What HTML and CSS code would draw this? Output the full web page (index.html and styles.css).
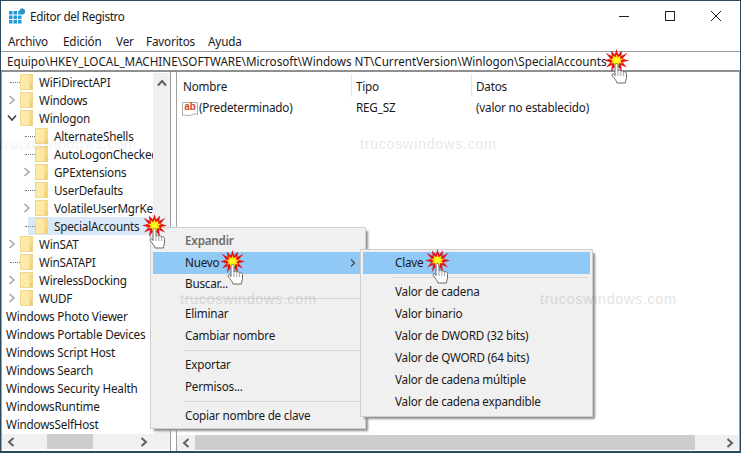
FILE: index.html
```html
<!DOCTYPE html>
<html lang="es">
<head>
<meta charset="utf-8">
<title>Editor del Registro</title>
<link rel="stylesheet" href="styles.css">
</head>
<body>
<svg class="defs" width="0" height="0" aria-hidden="true">
  <defs>
    <radialGradient id="glow"><stop offset="0.25" stop-color="#fffb1e"/><stop offset="0.7" stop-color="#ffe000"/><stop offset="1" stop-color="#ff9c00"/></radialGradient>
    <symbol id="folder" viewBox="0 0 14 16">
      <rect x="0.5" y="0.5" width="12" height="15" fill="#fde9a8"/>
      <rect x="9" y="1" width="3.5" height="14.5" fill="#f9dc8a"/>
      <path d="M0.5 15.5H13V10L10 10.5V15.5" fill="#f2cf6e"/>
      <rect x="0.5" y="0.5" width="12" height="15" fill="none" stroke="#f0d78e" stroke-width="1"/>
    </symbol>
    <symbol id="clicker" viewBox="0 0 26 36">
      <polygon points="12.5,0 14.2,5.5 18,1.5 17.4,7 23.5,3.8 18.6,9.8 25,11.5 18.6,13.2 23,18.5 17,16 18,23 14.2,17.5 12.5,24.5 10.8,17.5 7,23 8,16 2,18.5 6.4,13.2 0,11.5 6.4,9.8 1.5,3.8 7.6,7 7,1.5 10.8,5.5" fill="#e5141b"/>
      <polygon points="12.5,5 13.7,8.2 16.6,6.3 15.9,9.6 19.4,10 16.3,11.9 18.6,14.8 15.2,14.1 14.9,17.6 12.5,15.2 10.1,17.6 9.8,14.1 6.4,14.8 8.7,11.9 5.6,10 9.1,9.6 8.4,6.3 11.3,8.2" fill="url(#glow)"/>
      <path d="M11 16C11 14 14 14 14 16V22C14.6 21 16.4 21 16.8 22.3C17.4 21.4 19.2 21.6 19.6 23C20.4 22.4 22.5 22.8 22.5 24.5V28C22.5 30.5 21.5 31.5 21.5 34H13C12.5 31.5 10 29 8.5 27C7.5 25 9 24 10 25L11 26.5Z" fill="#fff" stroke="#6b6b6b" stroke-width="1"/>
      <path d="M14 22V27M16.8 22.3V27M19.6 23V27" fill="none" stroke="#8a8a8a" stroke-width="0.8"/>
    </symbol>
    <symbol id="chev-r" viewBox="0 0 8 10"><path d="M1.5 1L6 5L1.5 9" fill="none" stroke="#a6a6a6" stroke-width="1.6"/></symbol>
    <symbol id="chev-d" viewBox="0 0 10 8"><path d="M1 1.5L5 6L9 1.5" fill="none" stroke="#404040" stroke-width="1.6"/></symbol>
    <symbol id="chev-m" viewBox="0 0 8 10"><path d="M2 1.5L5.5 5L2 8.5" fill="none" stroke="#404040" stroke-width="1.1"/></symbol>
    <symbol id="arrow-l" viewBox="0 0 8 10"><path d="M6.5 1L2 5L6.5 9" fill="none" stroke="#606060" stroke-width="2"/></symbol>
    <symbol id="arrow-r" viewBox="0 0 8 10"><path d="M1.5 1L6 5L1.5 9" fill="none" stroke="#606060" stroke-width="2"/></symbol>
    <symbol id="arrow-u" viewBox="0 0 10 8"><path d="M1 6.5L5 2L9 6.5" fill="none" stroke="#606060" stroke-width="2"/></symbol>
  </defs>
</svg>

<main class="window">
  <header class="titlebar">
    <svg class="app-icon" width="16" height="16" viewBox="0 0 16 16" aria-hidden="true">
      <g fill="#1e9bd8">
        <rect x="0" y="3" width="3.5" height="3.5"/><rect x="4.5" y="3" width="3.5" height="3.5"/><rect x="9" y="3" width="3" height="3.5" fill="#37a9e0"/>
        <rect x="0" y="7.5" width="3.5" height="3.5"/><rect x="4.5" y="7.5" width="3.5" height="3.5"/><rect x="9" y="7.5" width="3.5" height="3.5"/>
        <rect x="0" y="12" width="3.5" height="3.5"/><rect x="4.5" y="12" width="3.5" height="3.5"/><rect x="9" y="12" width="3.5" height="3.5"/>
      </g>
      <path d="M13 0L16 2V5L13 7L10.5 5V2Z" fill="#2f8fc4"/>
    </svg>
    <span class="title">Editor del Registro</span>
    <div class="controls">
      <svg width="46" height="30" viewBox="0 0 46 30" aria-hidden="true"><path d="M18 15.5H28" stroke="#222" stroke-width="1"/></svg>
      <svg width="46" height="30" viewBox="0 0 46 30" aria-hidden="true"><rect x="18.5" y="10.5" width="9" height="9" fill="none" stroke="#222" stroke-width="1"/></svg>
      <svg width="46" height="30" viewBox="0 0 46 30" aria-hidden="true"><path d="M18 10L28 20M28 10L18 20" stroke="#222" stroke-width="1"/></svg>
    </div>
  </header>

  <nav class="menubar">
    <span>Archivo</span><span>Edición</span><span>Ver</span><span>Favoritos</span><span>Ayuda</span>
  </nav>

  <div class="address">Equipo\HKEY_LOCAL_MACHINE\SOFTWARE\Microsoft\Windows NT\CurrentVersion\Winlogon\SpecialAccounts</div>

  <div class="panes">
    <section class="tree-pane">
      <div class="tree-main">
        <ul class="tree">
          <li class="row"><span class="twig"></span><svg class="folder"><use href="#folder"/></svg><span class="label">WiFiDirectAPI</span></li>
          <li class="row"><svg class="chev-r"><use href="#chev-r"/></svg><svg class="folder"><use href="#folder"/></svg><span class="label">Windows</span></li>
          <li class="row"><svg class="chev-d"><use href="#chev-d"/></svg><svg class="folder"><use href="#folder"/></svg><span class="label">Winlogon</span></li>
          <li class="row child"><span class="twig"></span><svg class="folder"><use href="#folder"/></svg><span class="label">AlternateShells</span></li>
          <li class="row child"><span class="twig"></span><svg class="folder"><use href="#folder"/></svg><span class="label">AutoLogonChecked</span></li>
          <li class="row child"><svg class="chev-r"><use href="#chev-r"/></svg><svg class="folder"><use href="#folder"/></svg><span class="label">GPExtensions</span></li>
          <li class="row child"><span class="twig"></span><svg class="folder"><use href="#folder"/></svg><span class="label">UserDefaults</span></li>
          <li class="row child"><svg class="chev-r"><use href="#chev-r"/></svg><svg class="folder"><use href="#folder"/></svg><span class="label">VolatileUserMgrKey</span></li>
          <li class="row child selected"><span class="twig"></span><svg class="folder"><use href="#folder"/></svg><span class="label">SpecialAccounts</span></li>
          <li class="row"><svg class="chev-r"><use href="#chev-r"/></svg><svg class="folder"><use href="#folder"/></svg><span class="label">WinSAT</span></li>
          <li class="row"><span class="twig"></span><svg class="folder"><use href="#folder"/></svg><span class="label">WinSATAPI</span></li>
          <li class="row"><svg class="chev-r"><use href="#chev-r"/></svg><svg class="folder"><use href="#folder"/></svg><span class="label">WirelessDocking</span></li>
          <li class="row"><svg class="chev-r"><use href="#chev-r"/></svg><svg class="folder"><use href="#folder"/></svg><span class="label">WUDF</span></li>
          <li class="row plain">Windows Photo Viewer</li>
          <li class="row plain">Windows Portable Devices</li>
          <li class="row plain">Windows Script Host</li>
          <li class="row plain">Windows Search</li>
          <li class="row plain">Windows Security Health</li>
          <li class="row plain">WindowsRuntime</li>
          <li class="row plain">WindowsSelfHost</li>
        </ul>
        <div class="vscroll"><svg class="arrow-u"><use href="#arrow-u"/></svg></div>
      </div>
      <div class="hscroll hscroll-left">
        <svg class="arrow"><use href="#arrow-l"/></svg>
        <div class="track track-left"><div class="thumb"></div></div>
        <svg class="arrow"><use href="#arrow-r"/></svg>
      </div>
    </section>

    <section class="list-pane">
      <div class="list-main">
        <div class="list-head">
          <span class="col-name">Nombre</span><span class="col-type">Tipo</span><span class="col-data">Datos</span>
        </div>
        <div class="list-row">
          <span class="col-name cell-name">
            <svg class="ab-frame" viewBox="0 0 16 16" aria-hidden="true"><path d="M0.5 1.5H15.5V13.5C12 11.5 9 15.5 6 14.5C4 14 2 14 0.5 14.5Z" fill="#fff" stroke="#ababab"/></svg>
            <span class="ab-icon">ab</span>(Predeterminado)
          </span>
          <span class="col-type">REG_SZ</span>
          <span class="col-data">(valor no establecido)</span>
        </div>
      </div>
      <div class="hscroll hscroll-right">
        <svg class="arrow"><use href="#arrow-l"/></svg>
        <div class="track"><div class="thumb"></div></div>
        <svg class="arrow"><use href="#arrow-r"/></svg>
      </div>
    </section>
  </div>
</main>

<div class="menu menu-main">
  <div class="item strong">Expandir</div>
  <div class="item hot">Nuevo<svg class="submenu-arrow"><use href="#chev-m"/></svg></div>
  <div class="item">Buscar...</div>
  <div class="sep"></div>
  <div class="item">Eliminar</div>
  <div class="item">Cambiar nombre</div>
  <div class="sep sep-tight"></div>
  <div class="item">Exportar</div>
  <div class="item">Permisos...</div>
  <div class="sep sep-tight"></div>
  <div class="item">Copiar nombre de clave</div>
</div>

<div class="menu menu-sub">
  <div class="item hot">Clave</div>
  <div class="sep"></div>
  <div class="item">Valor de cadena</div>
  <div class="item">Valor binario</div>
  <div class="item">Valor de DWORD (32 bits)</div>
  <div class="item">Valor de QWORD (64 bits)</div>
  <div class="item">Valor de cadena múltiple</div>
  <div class="item">Valor de cadena expandible</div>
</div>

<span class="mark mark-a">trucoswindows.com</span>
<span class="mark mark-b">trucoswindows.com</span>
<span class="mark mark-c">trucoswindows.com</span>
<span class="mark mark-d">trucoswindows.com</span>

<svg class="click click-a"><use href="#clicker"/></svg>
<svg class="click click-b"><use href="#clicker"/></svg>
<svg class="click click-c"><use href="#clicker"/></svg>
<svg class="click click-d"><use href="#clicker"/></svg>
</body>
</html>
```

FILE: styles.css
```css
* { box-sizing: border-box; }
html, body { margin: 0; padding: 0; }
body {
  position: relative;
  width: 741px;
  height: 453px;
  overflow: hidden;
  background: #fff;
  font: 11.7px "Noto Sans", "Open Sans", sans-serif;
  color: #1a1a1a;
}
.defs { position: absolute; }

.window {
  display: flex;
  flex-direction: column;
  width: 741px;
  height: 453px;
  border: 1px solid #2b4a5e;
  border-bottom-width: 2px;
  background: #fff;
}

.titlebar { display: flex; align-items: center; height: 30px; flex: none; }
.app-icon { margin: 0 5px 0 8px; flex: none; }
.title { letter-spacing: -0.35px; }
.controls { display: flex; margin-left: auto; margin-right: 1px; }

.menubar { display: flex; height: 20px; flex: none; align-items: center; padding-left: 7px; letter-spacing: -0.15px; }
.menubar span:nth-child(1) { width: 55px; }
.menubar span:nth-child(2) { width: 53px; }
.menubar span:nth-child(3) { width: 30px; }
.menubar span:nth-child(4) { width: 62px; }

.address {
  height: 21px;
  flex: none;
  line-height: 19px;
  padding-left: 6px;
  border-top: 1px solid #9a9a9a;
  border-bottom: 2px solid #8f8f8f;
  white-space: nowrap;
  letter-spacing: -0.02px;
}

.panes { flex: 1; display: flex; min-height: 0; }

.tree-pane {
  width: 170px;
  flex: none;
  display: flex;
  flex-direction: column;
  border-right: 1px solid #a0a0a0;
  border-left: 1px solid #a0a0a0;
}
.tree-main { flex: 1; display: flex; min-height: 0; padding-top: 1px; }
.tree {
  list-style: none;
  margin: 0;
  padding: 0;
  width: 151px;
  flex: none;
  overflow: hidden;
  letter-spacing: -0.2px;
}
.row {
  display: flex;
  align-items: center;
  height: 18px;
  white-space: nowrap;
  padding-left: 4px;
}
.row.child { padding-left: 19px; }
.row.plain { padding-left: 4px; }
.selected { background: linear-gradient(#d9e9f8, #d9e9f8) no-repeat 26px 0 / 100% 100%; }
.twig { width: 10px; height: 1px; margin-left: 4px; border-top: 1px dotted #777; flex: none; }
.chev-r { width: 8px; height: 10px; margin: 0 4px 0 2px; flex: none; }
.chev-d { width: 10px; height: 8px; margin: 0 3px 0 1px; flex: none; }
.folder { width: 14px; height: 16px; flex: none; margin-right: 5px; }
.label { flex: none; }

.vscroll {
  flex: 1;
  background: #f0f0f0;
  display: flex;
  justify-content: center;
  padding-top: 6px;
}
.arrow-u { width: 10px; height: 8px; }

.hscroll {
  height: 15px;
  flex: none;
  margin-bottom: 2px;
  background: #f0f0f0;
  display: flex;
  align-items: center;
}
.arrow { width: 8px; height: 10px; flex: none; margin: 0 5px; }
.track { flex: 1; height: 15px; }
.thumb { height: 100%; background: #cdcdcd; }
.hscroll-left { padding-right: 17px; }
.track-left { padding-left: 27px; padding-right: 42px; }

.list-pane {
  flex: 1;
  display: flex;
  flex-direction: column;
  margin-left: 5px;
  border-left: 1px solid #a0a0a0;
  border-right: 1px solid #a0a0a0;
  letter-spacing: -0.2px;
}
.list-main { flex: 1; min-height: 0; }
.list-head, .list-row { display: flex; align-items: center; }
.list-head { height: 25px; padding-top: 2px; }
.list-head span { height: 100%; display: flex; align-items: center; }
.list-head .col-type, .list-head .col-data { border-left: 1px solid #e5e5e5; }
.list-row { height: 20px; }
.col-name { width: 174px; padding-left: 6px; flex: none; }
.col-type { width: 120px; padding-left: 4px; flex: none; }
.col-data { padding-left: 4px; }
.list-row .col-type { padding-left: 5px; }
.list-row .col-data { padding-left: 5px; }
.cell-name { display: flex; align-items: center; padding-left: 5px; position: relative; }
.ab-frame { position: absolute; left: 5px; top: 2px; width: 16px; height: 16px; }
.ab-icon {
  width: 16px;
  margin-right: 1px;
  font: bold 10px/13px "Liberation Sans", sans-serif;
  letter-spacing: 0;
  text-align: center;
  color: #d5432a;
  flex: none;
  position: relative;
  top: -1px;
}
.hscroll-right { margin-bottom: 1px; }
.hscroll-right .track { padding: 0 26px 0 0; }

.menu {
  position: absolute;
  background: #f0f0f0;
  border: 1px solid #cfcfcf;
  padding: 2px;
  box-shadow: 3px 3px 2px -1px #8f8f8f;
  letter-spacing: -0.22px;
}
.menu-main { left: 150px; top: 227px; width: 216px; height: 202px; }
.menu-sub { left: 360px; top: 249px; width: 233px; height: 168px; }
.item { height: 22px; line-height: 21px; padding-left: 32px; position: relative; white-space: nowrap; }
.strong { font-weight: 600; color: #6d6d6d; }
.hot { background: #90c8f6; }
.menu-main .hot { margin-bottom: -1px; }
.sep { height: 1px; background: #d7d7d7; margin: 3px 2px 4px 30px; }
.sep-tight { margin: 3px 2px 3px 30px; }
.menu-sub .sep { margin: 3px 2px 3px 28px; }
.submenu-arrow { position: absolute; right: 6px; top: 6px; width: 8px; height: 10px; }

.mark {
  position: absolute;
  font: 14.5px "Liberation Sans", sans-serif;
  letter-spacing: 0.6px;
  color: #000;
  opacity: 0.09;
  white-space: nowrap;
}
.mark-a { left: 360px; top: 136px; }
.mark-b { left: 0; top: 136px; opacity: 0.05; }
.mark-c { left: 180px; top: 291px; opacity: 0.11; }
.mark-d { left: 540px; top: 291px; opacity: 0.11; }

.click { position: absolute; width: 26px; height: 36px; }
.click-a { left: 604px; top: 49px; }
.click-b { left: 142px; top: 214px; }
.click-c { left: 220px; top: 250px; }
.click-d { left: 425px; top: 249px; }
```
